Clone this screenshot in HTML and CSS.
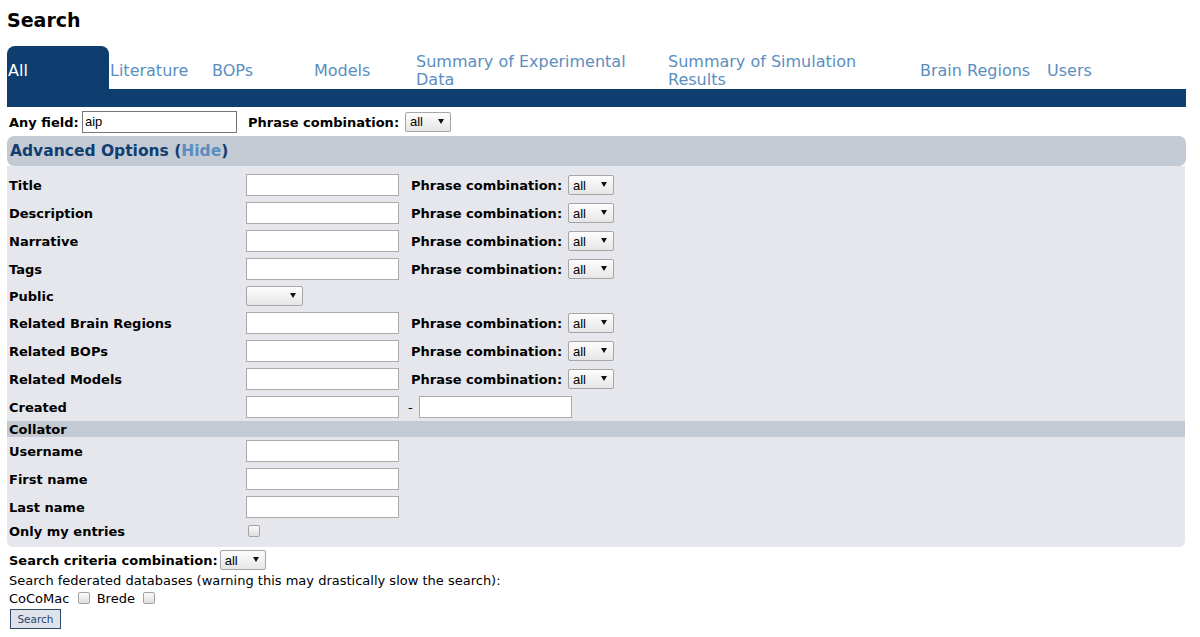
FILE: index.html
```html
<!DOCTYPE html>
<html lang="en">
<head>
<meta charset="utf-8">
<title>Search</title>
<link rel="stylesheet" href="styles.css">
</head>
<body>
<h1 class="page-title">Search</h1>
<nav class="tabs">
  <a class="tab active w102" href="#">All</a>
  <a class="tab w102" href="#">Literature</a>
  <a class="tab w102" href="#">BOPs</a>
  <a class="tab w102" href="#">Models</a>
  <a class="tab w252" href="#">Summary of Experimental Data</a>
  <a class="tab w252" href="#">Summary of Simulation Results</a>
  <a class="tab w127" href="#">Brain Regions</a>
  <a class="tab grow" href="#">Users</a>
</nav>
<div class="tabbar"></div>
<form class="search-form">
  <div class="anyfield">
    <label class="af-label">Any field:</label>
    <input class="txt af-input" type="text" value="aip">
    <label class="pc">Phrase combination:</label>
    <span class="sel"><select><option>all</option></select></span>
  </div>

  <div class="adv-head">Advanced Options (<a href="#" class="hide">Hide</a>)</div>
  <div class="adv">
    <div class="row"><label class="lbl">Title</label><div class="ctl"><input class="txt" type="text"><label class="pc pc-adv">Phrase combination:</label><span class="sel"><select><option>all</option></select></span></div></div>
    <div class="row"><label class="lbl">Description</label><div class="ctl"><input class="txt" type="text"><label class="pc pc-adv">Phrase combination:</label><span class="sel"><select><option>all</option></select></span></div></div>
    <div class="row"><label class="lbl">Narrative</label><div class="ctl"><input class="txt" type="text"><label class="pc pc-adv">Phrase combination:</label><span class="sel"><select><option>all</option></select></span></div></div>
    <div class="row"><label class="lbl">Tags</label><div class="ctl"><input class="txt" type="text"><label class="pc pc-adv">Phrase combination:</label><span class="sel"><select><option>all</option></select></span></div></div>
    <div class="row row-public"><label class="lbl">Public</label><div class="ctl"><span class="sel sel-public"><select><option></option></select></span></div></div>
    <div class="row"><label class="lbl">Related Brain Regions</label><div class="ctl"><input class="txt" type="text"><label class="pc pc-adv">Phrase combination:</label><span class="sel"><select><option>all</option></select></span></div></div>
    <div class="row"><label class="lbl">Related BOPs</label><div class="ctl"><input class="txt" type="text"><label class="pc pc-adv">Phrase combination:</label><span class="sel"><select><option>all</option></select></span></div></div>
    <div class="row"><label class="lbl">Related Models</label><div class="ctl"><input class="txt" type="text"><label class="pc pc-adv">Phrase combination:</label><span class="sel"><select><option>all</option></select></span></div></div>
    <div class="row"><label class="lbl">Created</label><div class="ctl"><input class="txt" type="text"><span class="dash">-</span><input class="txt" type="text"></div></div>
    <div class="collator">Collator</div>
    <div class="row"><label class="lbl">Username</label><div class="ctl"><input class="txt" type="text"></div></div>
    <div class="row"><label class="lbl">First name</label><div class="ctl"><input class="txt" type="text"></div></div>
    <div class="row"><label class="lbl">Last name</label><div class="ctl"><input class="txt" type="text"></div></div>
    <div class="row row-chk"><label class="lbl">Only my entries</label><div class="ctl"><input class="chk chk-mine" type="checkbox"></div></div>
  </div>

  <div class="crit">
    <label class="crit-label">Search criteria combination:</label>
    <span class="sel"><select><option>all</option></select></span>
  </div>
  <div class="fed">Search federated databases (warning this may drastically slow the search):</div>
  <div class="fed-dbs">CoCoMac <input class="chk" type="checkbox"> Brede <input class="chk" type="checkbox"></div>
  <button class="btn" type="button">Search</button>
</form>
</body>
</html>
```
FILE: styles.css
```css
body {
  margin: 0;
  padding: 0 14px 0 7px;
  font-family: "DejaVu Sans", Verdana, sans-serif;
  font-size: 13px;
  color: #000;
  background: #fff;
}

.page-title {
  margin: 0 0 15px 0;
  padding-top: 9px;
  font-size: 19px;
  line-height: 22px;
  font-weight: bold;
}

/* tabs */
.tabs {
  display: flex;
  height: 43px;
}
.tab {
  display: flex;
  align-items: center;
  box-sizing: border-box;
  padding: 7px 0 0 1px;
  font-size: 16px;
  line-height: 18px;
  color: #5b8ebf;
  text-decoration: none;
}
.tab.active {
  background: #0e3d70;
  color: #fff;
  border-radius: 8px 8px 0 0;
}
.w102 { flex: 0 0 102px; }
.w252 { flex: 0 0 252px; padding-right: 20px; }
.w127 { flex: 0 0 127px; }
.grow { flex: 1 1 auto; }

.tabbar {
  height: 18px;
  background: #0e3d70;
}

/* form controls */
.txt {
  box-sizing: border-box;
  width: 153px;
  height: 22px;
  margin: 0;
  border: 1px solid #ababab;
  background: #fff;
  padding: 1px 2px;
  font: 13px "Liberation Sans", Arial, sans-serif;
  color: #000;
}
.sel {
  position: relative;
  display: inline-block;
  height: 20px;
}
.sel select {
  -webkit-appearance: none;
  appearance: none;
  box-sizing: border-box;
  width: 46px;
  height: 20px;
  margin: 0;
  border: 1px solid #a6a6a6;
  border-radius: 2px;
  background: linear-gradient(#fdfdfd, #e6e6e6);
  padding: 0 0 0 4px;
  font: 13px "Liberation Sans", Arial, sans-serif;
  color: #000;
}
.sel::after {
  content: "";
  position: absolute;
  right: 7px;
  top: 7px;
  border-left: 3px solid transparent;
  border-right: 3px solid transparent;
  border-top: 5px solid #111;
  pointer-events: none;
}
.sel-public select { width: 57px; }

.chk {
  -webkit-appearance: none;
  appearance: none;
  box-sizing: border-box;
  width: 12px;
  height: 12px;
  margin: 0 3px 0 4px;
  border: 1px solid #a3a3a3;
  border-radius: 2px;
  background: linear-gradient(#fbfbfb, #dedede);
  vertical-align: -1px;
}

.pc {
  display: inline-block;
  width: 157px;
  font-weight: bold;
  white-space: nowrap;
}

/* any field */
.anyfield {
  display: flex;
  align-items: center;
  height: 29px;
  padding-left: 2px;
}
.af-label {
  width: 73px;
  padding-top: 1px;
  font-weight: bold;
}
.af-input {
  width: 155px;
  border-color: #767676;
  margin-right: 11px;
}
.anyfield .pc { padding-top: 1px; }

/* advanced */
.adv-head {
  height: 30px;
  line-height: 30px;
  padding-left: 3px;
  border-radius: 7px;
  background: #c4cad4;
  color: #103e70;
  font-size: 15.5px;
  font-weight: bold;
}
.hide {
  color: #5b8ebf;
  text-decoration: none;
}
.adv {
  background: #e6e7ec;
  border-radius: 0 0 6px 6px;
  padding: 5px 0 6px;
  margin-right: 1px;
}
.row {
  display: flex;
  align-items: center;
  height: 28px;
}
.row-public { height: 26px; }
.row-chk { height: 20px; }
.lbl {
  box-sizing: border-box;
  flex: 0 0 239px;
  padding-left: 2px;
  font-weight: bold;
}
.ctl {
  display: flex;
  align-items: center;
}
.pc-adv { margin-left: 12px; }
.dash { margin: 0 6px 0 9px; }
.chk-mine { margin: 0 0 0 2px; }
.collator {
  height: 16px;
  line-height: 17px;
  padding-left: 2px;
  background: #c4cad4;
  font-weight: bold;
}

/* bottom */
.crit {
  display: flex;
  align-items: center;
  height: 24px;
  margin-top: 1px;
  padding-left: 2px;
}
.crit-label {
  font-weight: bold;
  margin-right: 2px;
}
.fed {
  padding-left: 2px;
  line-height: 18px;
}
.fed-dbs {
  padding-left: 2px;
  line-height: 18px;
}
.btn {
  display: block;
  box-sizing: border-box;
  width: 51px;
  height: 20px;
  margin: 1px 0 0 3px;
  padding: 0;
  border: 1px solid #2f4b6c;
  background: #e0e4ea;
  color: #1f4471;
  font: 10.5px "DejaVu Sans", Verdana, sans-serif;
}
```
